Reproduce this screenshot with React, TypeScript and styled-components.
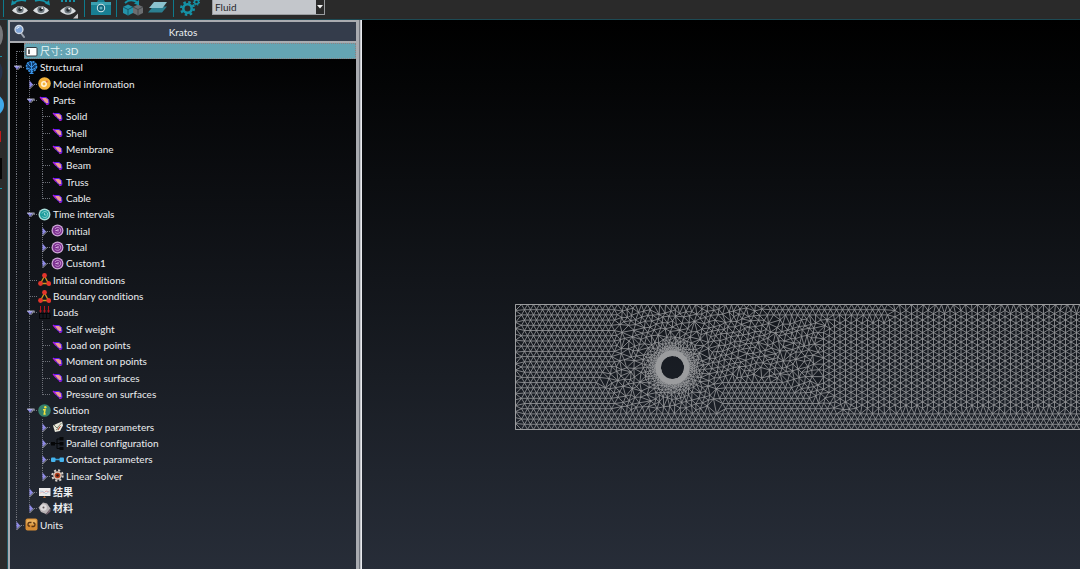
import React, { useMemo, useState } from "react";
import styled, { createGlobalStyle } from "styled-components";

const GlobalStyle = createGlobalStyle`
  *, *::before, *::after { box-sizing: border-box; }
  html, body, #root { height: 100%; margin: 0; }
  body {
    background: #2a2a2a;
    color: #eceef0;
    font-family: Lato, "Noto Sans CJK SC", sans-serif;
    font-size: 10px;
    font-variant-ligatures: none;
    line-height: 16px;
    overflow: hidden;
  }
`;

/* ---------- frame ---------- */

const Window = styled.div`
  display: flex;
  flex-direction: column;
  height: 100vh;
`;

const Toolbar = styled.header`
  display: flex;
  align-items: flex-start;
  flex: none;
  height: 20px;
  background: #2a2a2a;
  border-bottom: 1px solid #1d4a54;
  overflow: hidden;
`;

const Separator = styled.span`
  width: 1px;
  height: 17px;
  margin: 0 3px;
  background: #0e7a8c;
`;

const ToolButton = styled.button<{ $width: number }>`
  display: block;
  width: ${(p) => p.$width}px;
  height: 19px;
  padding: 0;
  border: 0;
  background: none;
  svg { display: block; margin: 0 auto; }
`;

const SelectBox = styled.label`
  position: relative;
  width: 113px;
  height: 15px;
  margin-left: 9px;
`;

const ProblemSelect = styled.select`
  display: block;
  appearance: none;
  width: 100%;
  height: 15px;
  padding: 0 12px 0 2px;
  border: 1px solid #9a9ca0;
  border-top: 0;
  border-radius: 0;
  background: #c3c6cb;
  color: #26282c;
  font: inherit;
  font-size: 10px;
  line-height: 14px;
`;

const SelectArrow = styled.span`
  position: absolute;
  top: 0;
  right: 1px;
  width: 8px;
  height: 14px;
  background: #2a2a2a;
  pointer-events: none;
  svg { display: block; }
`;

const Body = styled.div`
  display: flex;
  flex: 1;
  min-height: 0;
`;

const Rail = styled.nav`
  display: flex;
  flex-direction: column;
  flex: none;
  width: 8px;
  background: #2b2b2b;
  border-right: 1px solid #1f5965;
  svg { display: block; }
`;

const Panel = styled.aside`
  display: flex;
  flex-direction: column;
  flex: none;
  width: 354px;
  padding: 2px 6px 0 2px;
  background: #a9abb0;
  box-shadow: inset -1px 0 #e8eaee, inset -2px 0 #c2c4c9, inset -3px 0 #70747c;
`;

const PanelHeader = styled.div`
  display: grid;
  grid-template-columns: 1fr auto 1fr;
  align-items: center;
  flex: none;
  height: 19px;
  margin-bottom: 2px;
  background: #343c4b;
`;

const PanelTitle = styled.h1`
  margin: 0;
  font: inherit;
`;

const SearchButton = styled.button`
  justify-self: start;
  height: 18px;
  padding: 0 0 0 3px;
  border: 0;
  background: none;
  svg { display: block; }
`;

const TreeArea = styled.div`
  flex: 1;
  min-height: 0;
  overflow: hidden;
  background: linear-gradient(#000, #060709 12%, #272d38);
`;

const Tree = styled.ul`
  display: grid;
  grid-template-rows: repeat(30, 1fr);
  height: 490px;
  margin: 0;
  padding: 0;
  list-style: none;
`;

const Row = styled.li`
  display: flex;
  min-height: 0;
`;

const Guide = styled.span`
  flex: none;
  width: 13px;
  height: 16px;
  svg { display: block; overflow: visible; }
`;

const Expander = styled.button`
  flex: none;
  width: 13px;
  height: 16px;
  padding: 0;
  border: 0;
  background: none;
  svg { display: block; overflow: visible; }
`;

const Item = styled.button<{ $selected?: boolean; $strong?: boolean }>`
  display: flex;
  align-items: center;
  gap: 2px;
  flex: 1;
  height: 16px;
  margin-left: 1px;
  padding: 0 1px;
  border: 0;
  background: ${(p) => (p.$selected ? "#64a4b3" : "none")};
  outline: ${(p) => (p.$selected ? "1px dotted #8f7f7f" : "none")};
  outline-offset: -1px;
  color: ${(p) => (p.$selected ? "#e6f4f6" : "inherit")};
  font: inherit;
  font-variant-ligatures: none;
  font-weight: ${(p) => (p.$strong ? 700 : 400)};
  line-height: 16px;
  text-align: left;
  white-space: nowrap;
  svg { flex: none; display: block; }
`;

const Viewport = styled.main`
  flex: 1;
  min-width: 0;
  overflow: hidden;
  background: linear-gradient(#000, #040506 12%, #272d38);
  svg { display: block; width: 100%; height: 100%; }
`;

/* ---------- tree ---------- */

type IconName =
  | "card" | "structure" | "info" | "part" | "clock" | "interval" | "nodes" | "loads"
  | "solution" | "strategy" | "parallel" | "contact" | "gear" | "results" | "material" | "units";

const ICONS: Record<IconName, React.ReactNode> = {
  card: (
    <>
      <rect x="1" y="2.5" width="11" height="8.5" rx="1" fill="#fff" stroke="#333a40" />
      <path d="M4 4.5v4.5" stroke="#222" strokeWidth="1.4" />
    </>
  ),
  structure: (
    <>
      <path d="M1 5.5Q1 .5 6.5.5T12 5.5Q12 8.5 8.5 9.5L8 12.5H5L4.500 9.5Q1 8.5 1 5.5z" fill="#123c6c" />
      <g stroke="#3a94e6" fill="none">
        <circle cx="6.5" cy="5.5" r="5" strokeDasharray="2 1" strokeWidth="1.6" />
        <path d="M6.5 1v11.5M3 3l3.5 3.5L10 3M2.5 7l4 2 4-2M4.5 12.5h4" />
      </g>
    </>
  ),
  info: (
    <>
      <circle cx="6.5" cy="6.5" r="6.3" fill="#f5b43c" />
      <circle cx="6" cy="7" r="2.2" fill="none" stroke="#fff3d8" strokeWidth="1.5" />
      <circle cx="8.8" cy="4.6" r="1" fill="#e0693c" />
    </>
  ),
  part: (
    <>
      <path d="M3 3.500L8 3.500 10.500 5.500 11 9.500 8.500 9.800 6 7.800z" fill="#ee9a90" stroke="#5a1cf0" strokeLinejoin="round" />
      <path d="M2 3l3 3.500M8 10.200l2.500.3" stroke="#b01ad8" strokeWidth="1.2" />
    </>
  ),
  clock: (
    <>
      <circle cx="6.5" cy="6.5" r="6" fill="#a9dcd8" />
      <circle cx="6.5" cy="6.5" r="4.6" fill="#1d9c9c" />
      <path d="M4 5.5a3 3 0 1 1 .5 3M6.5 5v2h2" fill="none" stroke="#9fe0dc" strokeWidth=".8" />
    </>
  ),
  interval: (
    <>
      <circle cx="6.5" cy="6.5" r="6" fill="#cfaad8" />
      <circle cx="6.5" cy="6.5" r="4.8" fill="#7e3291" />
      <path d="M4 5a3 3 0 1 1 .3 3.200" fill="none" stroke="#c79ad2" strokeWidth=".9" />
      <path d="M4.5 6.5h2M7 5v2.500" fill="none" stroke="#d9b0e2" />
    </>
  ),
  nodes: (
    <>
      <path d="M6.5 3L2.5 10.5h8z" fill="none" stroke="#c99a1e" strokeWidth="1.3" />
      <g fill="#e5352c">
        <circle cx="6.5" cy="2.5" r="2.4" />
        <circle cx="2.5" cy="10.5" r="2.4" />
        <circle cx="10.7" cy="10.5" r="2.4" />
      </g>
    </>
  ),
  loads: (
    <>
      <path d="M1.5 7.5h10.5v5H1.5zM5 7.5v5M8.5 7.5v5" fill="none" stroke="#050608" />
      <path d="M2.5 0v6M6.5 0v6M10.5 0v6" stroke="#b3161c" />
      <path d="M1 4.5h3L2.5 7zM5 4.5h3L6.5 7zM9 4.5h3L10.5 7z" fill="#b3161c" />
    </>
  ),
  solution: (
    <>
      <circle cx="6.5" cy="6.5" r="6.3" fill="#35806c" />
      <circle cx="7.3" cy="3.3" r="1.2" fill="#f4e23c" />
      <path d="M5 5.8h2l-.8 4.200h1.500" fill="none" stroke="#f4e23c" strokeWidth="1.5" />
    </>
  ),
  strategy: (
    <>
      <path d="M2 5.5L5 4l6-2.500 1 4-3 5.500-5 1z" fill="#e8e6da" />
      <path d="M3 5l3 3L10.5 3M5 10l4-3" fill="none" stroke="#77806c" />
      <path d="M7 10l2.5-4" stroke="#c44b33" />
    </>
  ),
  parallel: (
    <>
      <path d="M3 6.5h3M6 2v9.5M6 2h3M6 6.5h3M6 11.5h3" fill="none" stroke="#050608" />
      <path d="M0 5h4v3.5H0zM8.5 0h4v3.5h-4zM8.5 5h4v3.5h-4zM8.5 10h4v3h-4z" fill="#050608" />
    </>
  ),
  contact: (
    <>
      <path d="M3 6.5h7" stroke="#2f9edb" strokeWidth="1.5" />
      <rect x="0" y="4.5" width="4.5" height="4.5" rx="1" fill="#46b4ee" />
      <rect x="8.5" y="4.5" width="4.5" height="4.5" rx="1" fill="#46b4ee" />
    </>
  ),
  gear: (
    <>
      <circle cx="6.5" cy="6.5" r="5.2" fill="none" stroke="#d8d2cc" strokeWidth="2" strokeDasharray="2.08 2" />
      <circle cx="6.5" cy="6.5" r="4.2" fill="#d9c6b8" />
      <circle cx="6.5" cy="6.5" r="2.8" fill="#b5401f" />
      <circle cx="6.5" cy="6.5" r="1.3" fill="#2b1a18" />
    </>
  ),
  results: (
    <>
      <rect x="1" y="2" width="11.5" height="8" fill="#eceaea" />
      <path d="M2 7.5l2-2 2 1.5 2-2 3.5 1" fill="none" stroke="#e09a9a" strokeWidth=".8" />
      <path d="M2 5l3 .5 3 2.5 3.5-3" fill="none" stroke="#a9c4e0" strokeWidth=".8" />
      <path d="M5 12l1.5-2L8 12z" fill="#b3662e" />
    </>
  ),
  material: (
    <>
      <path d="M.5 5.5L5 .5l4 1 3.5 5-4.5 5.5-5-2z" fill="#b9b3b5" />
      <path d="M7.5 12.5l5-6v3l-3.5 3z" fill="#7a6570" />
      <circle cx="5.5" cy="5.5" r="3.3" fill="#dddadb" />
      <circle cx="5.5" cy="5.5" r="1" fill="#5c5458" />
    </>
  ),
  units: (
    <>
      <rect x=".5" y=".5" width="12" height="12" rx="2" fill="#d58c34" />
      <rect x="1.5" y="1.5" width="10" height="5" rx="1.5" fill="#e9b05c" />
      <path d="M6.5 4.5H4.5Q3 4.5 3 6.5t2 1.5M6.5 8.5h2Q10 8.5 10 6.5T8 5" fill="none" stroke="#5b3410" strokeWidth="1.3" />
    </>
  ),
};

type Node = { label: string; icon: IconName; closed?: boolean; strong?: boolean; children?: Node[] };

const parts = (...labels: string[]): Node[] => labels.map((label) => ({ label, icon: "part" }));

const MODEL: Node[] = [
  { label: "尺寸: 3D", icon: "card" },
  {
    label: "Structural",
    icon: "structure",
    children: [
      { label: "Model information", icon: "info", closed: true },
      { label: "Parts", icon: "part", children: parts("Solid", "Shell", "Membrane", "Beam", "Truss", "Cable") },
      {
        label: "Time intervals",
        icon: "clock",
        children: ["Initial", "Total", "Custom1"].map((label) => ({ label, icon: "interval" as const, closed: true })),
      },
      { label: "Initial conditions", icon: "nodes" },
      { label: "Boundary conditions", icon: "nodes" },
      {
        label: "Loads",
        icon: "loads",
        children: parts("Self weight", "Load on points", "Moment on points", "Load on surfaces", "Pressure on surfaces"),
      },
      {
        label: "Solution",
        icon: "solution",
        children: [
          { label: "Strategy parameters", icon: "strategy", closed: true },
          { label: "Parallel configuration", icon: "parallel", closed: true },
          { label: "Contact parameters", icon: "contact", closed: true },
          { label: "Linear Solver", icon: "gear", closed: true },
        ],
      },
      { label: "结果", icon: "results", closed: true, strong: true },
      { label: "材料", icon: "material", closed: true, strong: true },
    ],
  },
  { label: "Units", icon: "units", closed: true },
];

type FlatRow = { node: Node; guides: boolean[]; first: boolean; last: boolean };

function flatten(nodes: Node[], folded: Set<string>, guides: boolean[] = []): FlatRow[] {
  return nodes.flatMap((node, i) => {
    const last = i === nodes.length - 1;
    const row = { node, guides, first: guides.length === 0 && i === 0, last };
    const below = node.children && !folded.has(node.label) ? flatten(node.children, folded, [...guides, !last]) : [];
    return [row, ...below];
  });
}

const DOTS = { stroke: "#6d7078", strokeDasharray: "1 1", shapeRendering: "crispEdges" as const };

function Connector({ from = 0, to = 17, reach, mark }: { from?: number; to?: number; reach?: boolean; mark?: "open" | "closed" }) {
  return (
    <svg width="13" height="16" aria-hidden="true">
      <path d={`M6.5 ${from}V${to}`} {...DOTS} />
      {reach && <path d="M7 8.5H14" {...DOTS} />}
      {mark === "open" && (
        <>
          <path d="M4 7h6L7 10.5z" fill="#8f8be8" />
          <path d="M4 7H11.5L7.5 11" fill="none" stroke="#d0d2e0" strokeWidth=".8" />
        </>
      )}
      {mark === "closed" && (
        <>
          <path d="M6.5 4.5l3.5 4-3.5 3.5z" fill="#8f8be8" />
          <path d="M6.5 13L11 8.5" fill="none" stroke="#d0d2e0" strokeWidth=".8" />
        </>
      )}
    </svg>
  );
}

function ModelTree() {
  const [folded, setFolded] = useState<Set<string>>(new Set());
  const [selected, setSelected] = useState("尺寸: 3D");
  const toggle = (label: string) =>
    setFolded((prev) => {
      const next = new Set(prev);
      if (!next.delete(label)) next.add(label);
      return next;
    });

  return (
    <Tree aria-label="Kratos model">
      {flatten(MODEL, folded).map(({ node, guides, first, last }) => {
        const open = !!node.children && !folded.has(node.label);
        const range = { from: first ? 8 : 0, to: last ? 9 : 17 };
        return (
          <Row key={node.label}>
            {guides.map((line, i) => (
              <Guide key={i}>{line && <Connector />}</Guide>
            ))}
            {node.children || node.closed ? (
              <Expander aria-label={`Toggle ${node.label}`} aria-expanded={open} onClick={() => toggle(node.label)}>
                <Connector {...range} reach mark={open ? "open" : "closed"} />
              </Expander>
            ) : (
              <Guide>
                <Connector {...range} reach />
              </Guide>
            )}
            <Item $selected={selected === node.label} $strong={node.strong} onClick={() => setSelected(node.label)}>
              <svg width="13" height="13" viewBox="0 0 13 13" aria-hidden="true">{ICONS[node.icon]}</svg>
              {node.label}
            </Item>
          </Row>
        );
      })}
    </Tree>
  );
}

/* ---------- mesh ---------- */

type Pt = [number, number];
type Circle = { a: number; b: number; c: number; x: number; y: number; r2: number };

const MESH = { width: 760, height: 125, cx: 157, cy: 63, hole: 12, step: 6 };

function noise(seed: number) {
  let s = seed;
  return () => {
    s = (s * 16807) % 2147483647;
    return s / 2147483647 - 0.5;
  };
}

function meshPoints(): Pt[] {
  const { width, height, cx, cy, hole, step } = MESH;
  const rand = noise(4217);
  const pts: Pt[] = [];
  const cells = new Map<string, Pt[]>();
  const put = (x: number, y: number, gap: number) => {
    const gx = Math.floor(x / 8);
    const gy = Math.floor(y / 8);
    for (let i = -1; i <= 1; i++)
      for (let j = -1; j <= 1; j++)
        for (const q of cells.get(`${gx + i},${gy + j}`) ?? [])
          if (Math.hypot(q[0] - x, q[1] - y) < gap) return;
    const p: Pt = [x, y];
    pts.push(p);
    const key = `${gx},${gy}`;
    cells.set(key, [...(cells.get(key) ?? []), p]);
  };

  for (let x = 0; x <= width; x += step) {
    put(x, 0, 1);
    put(x, height, 1);
  }
  for (let i = 1; i < 21; i++) {
    put(0, (i * height) / 21, 1);
    put(width, (i * height) / 21, 1);
  }

  // rings that widen away from the hole
  let h = 0.8;
  for (let r = hole; r < 34; r += h * 0.87, h = Math.min(5.4, h * 1.165)) {
    const n = Math.round((2 * Math.PI * r) / h);
    const turn = r === hole ? 0 : rand();
    for (let i = 0; i < n; i++) {
      const a = ((i + turn) / n) * Math.PI * 2;
      const s = r === hole ? r : r + rand() * h * 0.7;
      put(cx + s * Math.cos(a), cy + s * Math.sin(a), h * 0.6);
    }
  }
  const clear = (x: number, y: number) => Math.hypot(x - cx, y - cy) > 35;

  // horizontal rows: left block, the bottom strip and the wedge behind the hole
  const rowGap = height / 24;
  for (let j = 1; j < 24; j++) {
    const y = j * rowGap;
    const leftEnd = 102 - Math.max(0, 20 - Math.abs(y - 75)) * 0.9;
    for (let x = j % 2 ? 3 : 6; x < width; x += step) {
      const strip = j > 20 || (y > 76 && x > 205 && x < 300 + (y - 95) * 1.8) || (j < 3 && x > 250 && x < 375);
      if ((x < leftEnd || strip) && clear(x, y)) put(x, y, 4);
    }
  }
  // vertical columns: the wake block
  for (let i = 0; i * 5.5 < width; i++) {
    const x = i * 5.5;
    for (let y = i % 2 ? 6 : 9.2; y < height - 16; y += 6.3) {
      const start = 318 - (y > 25 ? 12 : 0) + Math.max(0, y - 85) * 1.4;
      if (x > start) put(x, y, 4);
    }
  }
  // transition: lattice that turns from one direction into the other
  for (let i = -50; i < 110; i++)
    for (let j = -40; j < 60; j++) {
      const u = (i + (j % 2 ? 0.5 : 0)) * 5.9;
      const v = j * 5.1;
      const x = 150 + u * 0.97 + v * 0.24 + rand() * 2.4;
      const y = 60 - u * 0.24 + v * 0.97 + rand() * 2.4;
      if (x > 80 && x < 360 && y > 3 && y < height - 3 && clear(x, y)) put(x, y, 4.3);
    }
  return pts;
}

function circumscribe(p: Pt[], a: number, b: number, c: number): Circle {
  const [ax, ay] = p[a];
  const bx = p[b][0] - ax;
  const by = p[b][1] - ay;
  const dx = p[c][0] - ax;
  const dy = p[c][1] - ay;
  const d = 2 * (bx * dy - by * dx) || 1e-9;
  const b2 = bx * bx + by * by;
  const c2 = dx * dx + dy * dy;
  const ux = (dy * b2 - by * c2) / d;
  const uy = (bx * c2 - dx * b2) / d;
  return { a, b, c, x: ax + ux, y: ay + uy, r2: ux * ux + uy * uy };
}

// Sweep-line Delaunay triangulation
function triangulate(input: Pt[]): number[][] {
  const n = input.length;
  const jig = noise(97);
  const p: Pt[] = input.map(([x, y]) => [x + jig() * 1e-4, y + jig() * 1e-4]);
  const order = p.map((_, i) => i).sort((i, j) => p[i][0] - p[j][0]);
  p.push([-20000, -10000], [20000, -10000], [0, 20000]);
  let open = [circumscribe(p, n, n + 1, n + 2)];
  const done: Circle[] = [];
  for (const i of order) {
    const [x, y] = p[i];
    const edges = new Map<string, [number, number] | null>();
    const keep: Circle[] = [];
    for (const t of open) {
      const dx = x - t.x;
      if (dx > 0 && dx * dx > t.r2) {
        done.push(t);
        continue;
      }
      const dy = y - t.y;
      if (dx * dx + dy * dy > t.r2) {
        keep.push(t);
        continue;
      }
      for (const [s, e] of [[t.a, t.b], [t.b, t.c], [t.c, t.a]]) {
        const key = s < e ? `${s}-${e}` : `${e}-${s}`;
        edges.set(key, edges.has(key) ? null : [s, e]);
      }
    }
    for (const e of edges.values()) if (e) keep.push(circumscribe(p, e[0], e[1], i));
    open = keep;
  }
  return [...done, ...open].filter((t) => t.a < n && t.b < n && t.c < n).map((t) => [t.a, t.b, t.c]);
}

function meshPath() {
  const pts = meshPoints();
  const seen = new Set<string>();
  let d = "";
  for (const t of triangulate(pts)) {
    const mx = (pts[t[0]][0] + pts[t[1]][0] + pts[t[2]][0]) / 3 - MESH.cx;
    const my = (pts[t[0]][1] + pts[t[1]][1] + pts[t[2]][1]) / 3 - MESH.cy;
    if (Math.hypot(mx, my) < MESH.hole - 0.1) continue;
    for (let k = 0; k < 3; k++) {
      const s = Math.min(t[k], t[(k + 1) % 3]);
      const e = Math.max(t[k], t[(k + 1) % 3]);
      if (seen.has(`${s}-${e}`)) continue;
      seen.add(`${s}-${e}`);
      d += `M${pts[s][0].toFixed(1)} ${pts[s][1].toFixed(1)}L${pts[e][0].toFixed(1)} ${pts[e][1].toFixed(1)}`;
    }
  }
  return d;
}

function MeshView() {
  const d = useMemo(meshPath, []);
  return (
    <Viewport>
      <svg role="img" aria-label="Triangle mesh around a cylinder">
        <g transform="translate(153.5 284.5)" fill="none" stroke="#9b9c9e">
          <path d={d} strokeWidth="0.8" />
          <circle cx={MESH.cx} cy={MESH.cy} r={MESH.hole + 2.5} strokeWidth="5" />
          <path d={`M${MESH.width} 0H0V${MESH.height}H${MESH.width}`} />
        </g>
      </svg>
    </Viewport>
  );
}

/* ---------- toolbar drawings ---------- */

const TEAL = "#1591a6";

function Eye({ children }: { children: React.ReactNode }) {
  return (
    <svg width="18" height="19" viewBox="0 0 18 19" aria-hidden="true">
      <path d="M1 10.5Q9 1.5 17 10.5 9 18 1 10.5z" fill="#d9dde0" />
      <circle cx="9" cy="9.5" r="3.6" fill="#6d777e" />
      <circle cx="9" cy="9.5" r="1.8" fill="#22282c" />
      <circle cx="10.2" cy="8.2" r=".9" fill="#fff" />
      {children}
    </svg>
  );
}

const gearTeeth = (cx: number, cy: number, r: number, w: number, n: number) => (
  <circle cx={cx} cy={cy} r={r} fill="none" stroke={TEAL} strokeWidth={w} strokeDasharray={`${(Math.PI * r) / n} ${(Math.PI * r) / n}`} />
);

export default function App() {
  return (
    <Window>
      <GlobalStyle />
      <Toolbar>
        <Separator />
        <ToolButton $width={25} aria-label="Previous view">
          <Eye>
            <path d="M2 3.5Q8-1.5 15 1" fill="none" stroke={TEAL} strokeWidth="1.8" />
            <path d="M0 5.5L1 0l4 3.5z" fill={TEAL} />
          </Eye>
        </ToolButton>
        <ToolButton $width={18} aria-label="Next view">
          <Eye>
            <path d="M16 3.5Q10-1.5 3 1" fill="none" stroke={TEAL} strokeWidth="1.8" />
            <path d="M18 5.5L17 0l-4 3.5z" fill={TEAL} />
          </Eye>
        </ToolButton>
        <ToolButton $width={31} aria-label="View options">
          <svg width="24" height="19" viewBox="0 0 24 19" aria-hidden="true">
            <path d="M6 11Q14 2 22 11 14 18.5 6 11z" fill="#d9dde0" />
            <circle cx="14" cy="10" r="3.6" fill="#6d777e" />
            <circle cx="14" cy="10" r="1.8" fill="#22282c" />
            <circle cx="15.2" cy="8.7" r=".9" fill="#fff" />
            <path d="M8 0v2M12 0v2M16 0v2M20 0v2" stroke={TEAL} strokeWidth="2" />
            <path d="M24 13.5v5h-5z" fill="#c4c6c8" />
          </svg>
        </ToolButton>
        <Separator />
        <ToolButton $width={25} aria-label="Snapshot">
          <svg width="20" height="19" viewBox="0 0 20 19" aria-hidden="true">
            <path d="M0 2h6l1-2h6l1 2h6v13H0z" fill="#187f93" />
            <path d="M0 2h20v3H0z" fill="#3ba0b1" />
            <circle cx="10" cy="8" r="4.2" fill="#d7e6ea" />
            <circle cx="10" cy="8" r="3.2" fill="#14647a" />
            <circle cx="10" cy="8" r="1.5" fill="#5fb0c0" />
          </svg>
        </ToolButton>
        <Separator />
        <ToolButton $width={26} aria-label="Toggle geometry and mesh">
          <svg width="20" height="19" viewBox="0 0 20 19" aria-hidden="true">
            <path d="M0 7l5-2.5L10 7v6l-5 2.5L0 13z" fill="#2594aa" />
            <path d="M0 7l5 2.5L10 7M5 9.5v6" fill="none" stroke="#125b6a" />
            <path d="M10 7l5-2.5L20 7v6l-5 2.5L10 13z" fill="#6b6e71" />
            <path d="M10 7l5 2.5L20 7M15 9.5v6" fill="none" stroke="#46494c" />
            <path d="M2 3Q7-2 14 2" fill="none" stroke={TEAL} strokeWidth="1.8" />
            <path d="M16 5.5V0l-5 3.5z" fill={TEAL} />
          </svg>
        </ToolButton>
        <ToolButton $width={24} aria-label="Layers">
          <svg width="20" height="19" viewBox="0 0 20 19" aria-hidden="true">
            <path d="M5 6.5h14L14 12.5H0z" fill="#2b7f90" />
            <path d="M6 2h13l-4.5 6H1z" fill="#8cc3ce" />
          </svg>
        </ToolButton>
        <Separator />
        <ToolButton $width={26} aria-label="Preferences">
          <svg width="20" height="19" viewBox="0 0 20 19" aria-hidden="true">
            {gearTeeth(7.5, 8.5, 6.3, 2.4, 8)}
            <circle cx="7.5" cy="8.5" r="4.2" fill="none" stroke={TEAL} strokeWidth="2.6" />
            {gearTeeth(16.5, 2, 3, 1.2, 7)}
            <circle cx="16.5" cy="2" r="2" fill="none" stroke={TEAL} strokeWidth="1.5" />
          </svg>
        </ToolButton>
        <SelectBox>
          <ProblemSelect aria-label="Problem type" defaultValue="Fluid">
            <option>Fluid</option>
          </ProblemSelect>
          <SelectArrow>
            <svg width="8" height="14" aria-hidden="true">
              <path d="M1 5h6L4 8.5z" fill="#f2f2f2" />
            </svg>
          </SelectArrow>
        </SelectBox>
      </Toolbar>
      <Body>
        <Rail aria-label="Tools">
          <svg width="7" height="170" aria-hidden="true">
            <ellipse cx="-2" cy="15" rx="5" ry="11" fill="#77797b" />
            <path d="M0 36.5h2M0 168.5h2" stroke={TEAL} />
            <ellipse cx="-4" cy="52" rx="6.5" ry="11" fill="#27344c" />
            <circle cx="-7" cy="85" r="11" fill="#3fa9ea" />
            <path d="M0 111h1v11H0z" fill="#c01a1a" />
            <path d="M0 138h2v21H0z" fill="#060606" />
          </svg>
        </Rail>
        <Panel>
          <PanelHeader>
            <SearchButton aria-label="Search">
              <svg width="14" height="16" viewBox="0 0 14 16" aria-hidden="true">
                <path d="M8 9l3 4" stroke="#9fa6b2" strokeWidth="2" strokeLinecap="round" />
                <circle cx="6" cy="5.5" r="4" fill="#7fa3d6" stroke="#d4dae4" strokeWidth="1.3" />
                <path d="M3.8 5Q4.5 3 6.5 3.1" fill="none" stroke="#f4f8ff" />
              </svg>
            </SearchButton>
            <PanelTitle>Kratos</PanelTitle>
          </PanelHeader>
          <TreeArea>
            <ModelTree />
          </TreeArea>
        </Panel>
        <MeshView />
      </Body>
    </Window>
  );
}
